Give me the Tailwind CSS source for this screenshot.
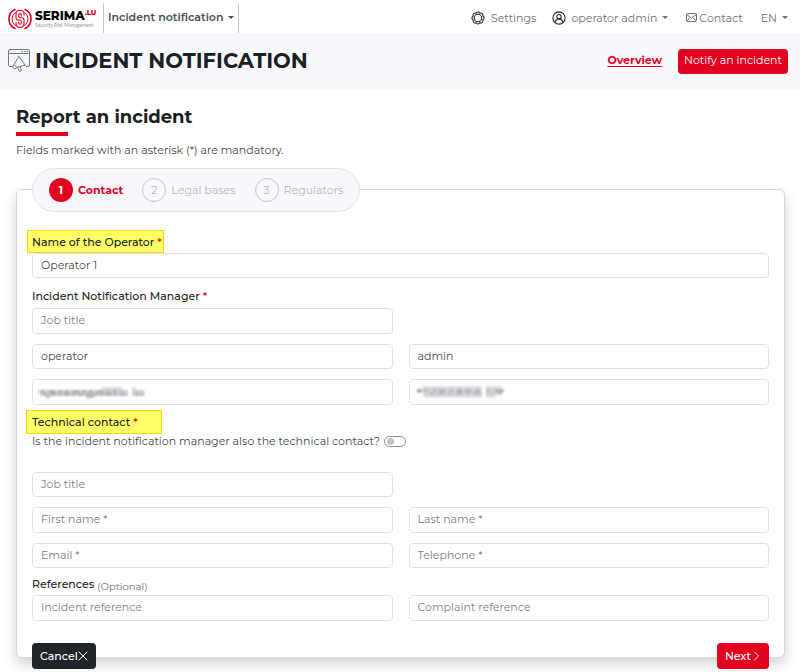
<!DOCTYPE html>
<html lang="en">
<head>
<meta charset="utf-8">
<meta name="viewport" content="width=device-width, initial-scale=1">
<title>Incident notification</title>
<script src="https://cdn.jsdelivr.net/npm/@tailwindcss/browser@4"></script>
</head>
<body class="bg-white font-['Montserrat',Inter,sans-serif] text-[11px] leading-4 text-[#444a50]">
<header class="flex h-[33px] items-center justify-between pl-2 pr-3">
  <div class="flex h-full items-center">
    <a href="#" class="flex w-[87px] items-center gap-[3px]" aria-label="Serima.lu">
      <svg class="mt-1 h-[22px] w-6 shrink-0" viewBox="0 0 24 22" fill="none" stroke="#e3001f" stroke-linecap="round">
        <path d="M7 1.500C3 3.200 1 6.800 1 11s2 7.800 6 9.500M17 1.500c4 1.700 6 5.300 6 9.500s-2 7.800-6 9.500" stroke-width="1.600"/>
        <path d="M7.500 4.500C5.200 6 4.200 8.300 4.200 11s1 5 3.300 6.500M16.500 4.500c2.300 1.500 3.300 3.800 3.300 6.500s-1 5-3.300 6.500" stroke-width="1"/>
        <path d="M16 7V6c0-2.200-1.600-3.700-4-3.700S8 3.800 8 6v4c0 1.300.9 2 2 2h1.800c1 0 1.500.6 1.500 1.500v1.200c0 .9-.5 1.400-1.300 1.400s-1.400-.5-1.400-1.400V14M8 14.500v1c0 2.400 1.600 3.900 4 3.900s4-1.500 4-3.900v-3.800c0-1.400-.8-2-2-2h-1.800c-1 0-1.500-.5-1.500-1.400V7c0-.8.500-1.400 1.300-1.400s1.400.6 1.400 1.400v1" stroke-width="1.100"/>
      </svg>
      <span class="mt-1 flex flex-col">
        <span class="flex items-start text-[12px] font-extrabold leading-[13px] text-black">SERIMA<span class="text-[7px] leading-2 text-[#e3001f]">.LU</span></span>
        <span class="whitespace-nowrap font-['Lato',sans-serif] text-[5px] leading-[6px] text-[#999]">Security Risk Management</span>
      </span>
    </a>
    <button class="ml-2 flex h-[30px] items-center gap-1 self-end border-x border-[#c5c8cb] px-1 pb-[2px] font-semibold text-[#4a4f54]">Incident notification
      <svg class="h-[3px] w-[6px]" viewBox="0 0 6 3" fill="currentColor"><path d="M0 0h6L3 3z"/></svg></button>
  </div>
  <nav class="flex items-center pt-[2px] text-[#6c7075]">
    <a href="#" class="flex items-center gap-[6px]">
      <svg class="size-[14px] text-[#222]" viewBox="0 0 16 16" fill="none" stroke="currentColor" stroke-width="1.200"><circle cx="8" cy="8" r="4.300"/><path d="M10.300 2.460a2.600 2.600 0 0 1 3.240 3.240a2.600 2.600 0 0 1 0 4.600a2.600 2.600 0 0 1-3.240 3.240a2.600 2.600 0 0 1-4.600 0a2.600 2.600 0 0 1-3.240-3.240a2.600 2.600 0 0 1 0-4.600a2.600 2.600 0 0 1 3.240-3.240a2.600 2.600 0 0 1 4.600 0z"/></svg>Settings</a>
    <button class="ml-4 flex items-center gap-[5px]">
      <svg class="size-[14px] text-[#222]" viewBox="0 0 16 16" fill="none" stroke="currentColor" stroke-width="1.200"><circle cx="8" cy="8" r="7"/><circle cx="8" cy="6.500" r="2.500"/><path d="M3.500 13c.5-2.600 2-4 4.500-4s4 1.400 4.500 4"/></svg>operator admin
      <svg class="h-[3px] w-[6px]" viewBox="0 0 6 3" fill="currentColor"><path d="M0 0h6L3 3z"/></svg></button>
    <a href="#" class="ml-[18px] flex items-center gap-[2px]">
      <svg class="h-[9px] w-[11px]" viewBox="0 0 11 9" fill="none" stroke="currentColor"><rect x=".5" y=".5" width="10" height="8" rx="1"/><path d="M.5 1.500l5 3.500 5-3.500M1 8l3-3.500M10 8L7 4.500"/></svg>Contact</a>
    <button class="ml-[18px] flex items-center gap-[5px]">EN
      <svg class="h-[3px] w-[6px]" viewBox="0 0 6 3" fill="currentColor"><path d="M0 0h6L3 3z"/></svg></button>
  </nav>
</header>
<div class="flex h-14 items-center justify-between bg-[#f7f8fb] pl-2 pr-3">
  <h1 class="flex items-center gap-[5px] text-[21px] font-bold leading-7 text-[#1b2025]">
    <svg class="h-6 w-[22px]" viewBox="0 0 22 24" fill="none" stroke="#777b80" stroke-width="1" stroke-linejoin="round"><path d="M4 17.500H2a1.500 1.500 0 0 1-1.500-1.500V2A1.500 1.500 0 0 1 2 .5h18A1.500 1.500 0 0 1 21.500 2v14a1.500 1.500 0 0 1-1.500 1.500h-2M.5 4.500h21M13.500 2.500h1.500M16 2.500h1.500M18.500 2.500H20"/><path d="M11 7.500l6 8.500-8 2.500-3-3zM6 15.500l-1.500 2.500 2.500 2 2-1.500M9.500 18.500l2 4 2-1-1.500-4M11 7.500l-1.500-.5M17 16l.5 1"/></svg>
    INCIDENT NOTIFICATION</h1>
  <div class="flex items-center gap-4">
    <a href="#" class="pb-[2px] font-bold text-[#e3001f] underline underline-offset-2">Overview</a>
    <button class="h-[25px] rounded bg-[#e3001f] px-[6px] pb-[2px] text-white">Notify an incident</button>
  </div>
</div>
<main class="pb-4 pl-4 pr-[15px] pt-4">
  <h2 class="text-[18px] font-bold leading-6 text-[#1b2025]">Report an incident</h2>
  <div class="mt-[3px] h-1 w-[52px] bg-[#e3001f]"></div>
  <p class="mt-[6px]">Fields marked with an asterisk (*) are mandatory.</p>

  <form class="mt-[31px] rounded-md border border-[#d5d8db] bg-white px-[15px] shadow-[0_6px_14px_rgba(0,0,0,0.18)]" onsubmit="return false">
    <ol class="-mt-[22px] flex h-11 w-fit items-center gap-[19px] rounded-full border border-[#e0e5ea] bg-[#f7f8fb] px-4 text-[#b5b8bb]">
      <li class="flex items-center gap-[5px] font-bold text-[#e3001f]"><span class="flex size-6 items-center justify-center rounded-full bg-[#e3001f] text-white">1</span>Contact</li>
      <li class="flex items-center gap-[5px]"><span class="flex size-6 items-center justify-center rounded-full border border-[#c5c8cb]">2</span>Legal bases</li>
      <li class="flex items-center gap-[5px]"><span class="flex size-6 items-center justify-center rounded-full border border-[#c5c8cb]">3</span>Regulators</li>
    </ol>

    <label for="operator" class="-ml-[5px] mt-[18px] flex h-[23px] w-fit items-center gap-[3px] border border-[#ffd21f] bg-[#ffff66] pl-1 pr-px font-medium text-[#212529]">Name of the Operator <span class="text-[#e3001f]">*</span></label>
    <input id="operator" value="Operator 1" class="block h-[25px] w-full rounded border border-[#dee2e6] px-2 pb-[2px]">

    <label for="job" class="mt-[10px] flex items-center gap-[3px] font-medium text-[#212529]">Incident Notification Manager <span class="text-[#e3001f]">*</span></label>
    <div class="mt-1 grid grid-cols-2 gap-x-4 gap-y-[10px]">
      <input id="job" placeholder="Job title" class="h-[26px] min-w-0 rounded border border-[#dee2e6] px-2 pb-[2px] placeholder:text-[#7b8086]">
      <span></span>
      <input aria-label="First name" value="operator" class="h-[25px] min-w-0 rounded border border-[#dee2e6] px-2 pb-[2px]">
      <input aria-label="Last name" value="admin" class="h-[25px] min-w-0 rounded border border-[#dee2e6] px-2 pb-[2px]">
      <div class="relative flex">
        <input aria-label="Email" type="email" class="h-[26px] w-full min-w-0 rounded border border-[#dee2e6] px-2">
        <svg class="pointer-events-none absolute left-[6px] top-[6px] h-[13px] w-[108px] blur-[1px]" viewBox="0 0 108 13" fill="none" stroke-width="3" aria-hidden="true">
          <path d="M64 3.500h20M94 3.500h4" stroke="#dcdcdf"/>
          <path d="M0 6.500h90M94 6.500h12" stroke="#cbcdd1"/><path d="M3 6.500h81" stroke="#a9adb1" stroke-dasharray="3 5 6 4 3 3"/>
          <path d="M2 9.500h88M94 9.500h12" stroke="#d0d1d5"/><path d="M6 9.500h84M97 9.500h9" stroke="#b0b4b9" stroke-dasharray="3 3 6 2"/>
          <path d="M8 12h4M48 12h8" stroke="#b9babd"/>
          <path d="M69 6.500h3M76 9.500h3M99 9.500h3" stroke="#a0bfda"/><path d="M64 8.500h4M50 9.500h4" stroke="#d0b5a8"/>
        </svg>
      </div>
      <div class="relative flex">
        <input aria-label="Telephone" type="tel" class="h-[26px] w-full min-w-0 rounded border border-[#dee2e6] px-2">
        <svg class="pointer-events-none absolute left-[7px] top-[6px] h-[13px] w-[90px] blur-[1px]" viewBox="0 0 90 13" fill="none" stroke-width="3" aria-hidden="true">
          <path d="M7 2.500h59M70 2.500h16" stroke="#dcdcdf"/>
          <path d="M1 5.500h65M70 5.500h18" stroke="#d0d1d4"/><path d="M8 5.500h58M70 5.500h18" stroke="#b3b6ba" stroke-dasharray="3 6 3 3 6 5"/>
          <path d="M7 8.500h59M70 8.500h16" stroke="#cfd0d4"/><path d="M14 8.500h52" stroke="#b5b9bd" stroke-dasharray="3 5 6 4"/>
          <path d="M8 11h58M70 11h9" stroke="#d6d7da"/>
          <path d="M1 6h4" stroke="#a58f8f"/><path d="M41 6h4M81 6.500h6" stroke="#9fb0bb"/>
        </svg>
      </div>
    </div>

    <h3 class="-ml-[6px] mt-[5px] flex h-6 w-[136px] items-center gap-[3px] border border-[#ffd21f] bg-[#ffff66] pl-[5px] font-medium text-[#212529]">Technical contact <span class="text-[#e3001f]">*</span></h3>
    <div class="flex items-center gap-1 leading-[14px]">
      <label for="same">Is the incident notification manager also the technical contact?</label>
      <input id="same" type="checkbox" role="switch" class="peer sr-only">
      <label for="same" aria-hidden="true" class="flex h-[11px] w-[22px] items-center rounded-full border border-[#85898e] px-[2px] peer-checked:justify-end"><span class="size-[7px] rounded-full bg-[#bfc2c5]"></span></label>
    </div>

    <div class="mt-6 grid grid-cols-2 gap-x-4 gap-y-[10px]">
      <input aria-label="Job title" placeholder="Job title" class="h-[25px] min-w-0 rounded border border-[#dee2e6] px-2 pb-[2px] placeholder:text-[#7b8086]">
      <span></span>
      <input aria-label="First name" placeholder="First name *" class="h-[26px] min-w-0 rounded border border-[#dee2e6] px-2 pb-[2px] placeholder:text-[#7b8086]">
      <input aria-label="Last name" placeholder="Last name *" class="h-[26px] min-w-0 rounded border border-[#dee2e6] px-2 pb-[2px] placeholder:text-[#7b8086]">
      <input aria-label="Email" placeholder="Email *" class="h-[25px] min-w-0 rounded border border-[#dee2e6] px-2 pb-[2px] placeholder:text-[#7b8086]">
      <input aria-label="Telephone" placeholder="Telephone *" class="h-[25px] min-w-0 rounded border border-[#dee2e6] px-2 pb-[2px] placeholder:text-[#7b8086]">
    </div>

    <h3 class="mt-2 flex items-start gap-[3px] font-medium text-[#212529]">References <span class="pt-[3px] text-[10px] font-normal text-[#6c7075]">(Optional)</span></h3>
    <div class="grid grid-cols-2 gap-4">
      <input aria-label="Incident reference" placeholder="Incident reference" class="h-[26px] min-w-0 rounded border border-[#dee2e6] px-2 pb-[2px] placeholder:text-[#7b8086]">
      <input aria-label="Complaint reference" placeholder="Complaint reference" class="h-[26px] min-w-0 rounded border border-[#dee2e6] px-2 pb-[2px] placeholder:text-[#7b8086]">
    </div>

    <div class="-mb-3 mt-[22px] flex justify-between font-medium text-white">
      <button type="button" class="flex h-[26px] items-center rounded bg-[#212529] px-2">Cancel
        <svg class="size-[10px]" viewBox="0 0 10 10" fill="none" stroke="currentColor" stroke-linecap="round"><path d="M1 1l8 8M9 1l-8 8"/></svg></button>
      <button class="flex h-[26px] items-center rounded bg-[#e3001f] px-2">Next
        <svg class="size-[10px]" viewBox="0 0 10 10" fill="none" stroke="currentColor" stroke-linecap="round" stroke-linejoin="round"><path d="M3.500 1l4 4-4 4"/></svg></button>
    </div>
  </form>
</main>
</body>
</html>
